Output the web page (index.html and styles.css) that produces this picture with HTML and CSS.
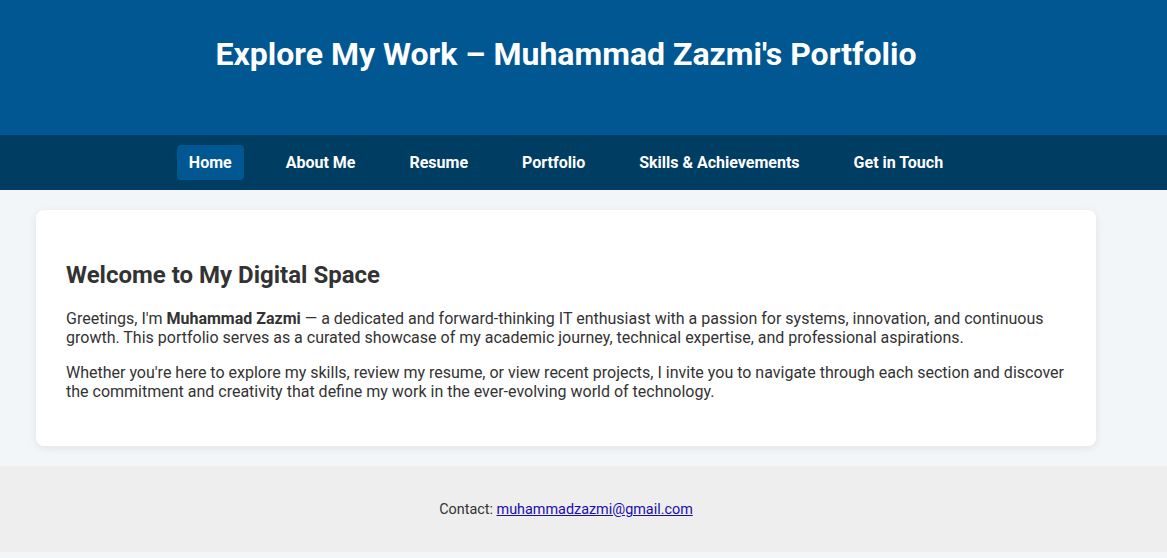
FILE: index.html
```html
<!DOCTYPE html>
<html lang="en">
<head>
<meta charset="utf-8">
<title>Muhammad Zazmi's Portfolio</title>
<link rel="stylesheet" href="styles.css">
</head>
<body>
<header class="site-header">
  <div class="wrap">
    <h1 class="site-title">Explore My Work – Muhammad Zazmi's Portfolio</h1>
  </div>
</header>
<nav class="site-nav">
  <div class="wrap nav-list">
    <a class="nav-link active" href="#">Home</a>
    <a class="nav-link" href="#">About Me</a>
    <a class="nav-link" href="#">Resume</a>
    <a class="nav-link" href="#">Portfolio</a>
    <a class="nav-link" href="#">Skills &amp; Achievements</a>
    <a class="nav-link" href="#">Get in Touch</a>
  </div>
</nav>
<main class="main">
  <div class="wrap">
    <section class="card">
      <h2 class="card-title">Welcome to My Digital Space</h2>
      <p>Greetings, I'm <strong>Muhammad Zazmi</strong> — a dedicated and forward-thinking IT enthusiast with a passion for systems, innovation, and continuous growth. This portfolio serves as a curated showcase of my academic journey, technical expertise, and professional aspirations.</p>
      <p>Whether you're here to explore my skills, review my resume, or view recent projects, I invite you to navigate through each section and discover the commitment and creativity that define my work in the ever-evolving world of technology.</p>
    </section>
  </div>
</main>
<footer class="site-footer">
  <div class="wrap">
    <p>Contact: <a href="mailto:muhammadzazmi@gmail.com">muhammadzazmi@gmail.com</a></p>
  </div>
</footer>
</body>
</html>
```
FILE: styles.css
```css
* { box-sizing: border-box; }
html, body {
  margin: 0;
  padding: 0;
}
body {
  font-family: Roboto, "Liberation Sans", Arial, sans-serif;
  background: #f2f6f9;
  color: #333;
}
.wrap {
  width: 1132px;
}
.site-header {
  background: #005792;
  color: #fff;
  height: 135px;
}
.site-header .wrap {
  display: flex;
  justify-content: center;
  padding-top: 34px;
}
.site-title {
  margin: 0;
  font-size: 32px;
  font-weight: 700;
  line-height: 40px;
}
.site-nav {
  background: #003d63;
  height: 55px;
}
.nav-list {
  display: flex;
  justify-content: center;
  align-items: center;
  height: 55px;
  gap: 30px;
}
.nav-link {
  color: #fff;
  text-decoration: none;
  font-weight: 700;
  font-size: 16px;
  line-height: 19px;
  padding: 8px 12px;
  border-radius: 4px;
}
.nav-link.active {
  background: #005792;
}
.main {
  padding: 20px 0;
}
.main .wrap {
  padding: 0 36px;
}
.card {
  background: #fff;
  border-radius: 8px;
  padding: 31px 30px 29px;
  box-shadow: 0 2px 8px rgba(0, 0, 0, 0.08);
}
.card-title {
  font-size: 24px;
  font-weight: 700;
  line-height: 28px;
  margin: 20px 0;
  color: #333;
}
.card p {
  font-size: 16px;
  line-height: 19px;
  margin: 16px 0;
}
.site-footer {
  background: #eeeeee;
  height: 86px;
}
.site-footer .wrap {
  padding: 21px 0 20px;
  text-align: center;
}
.site-footer p {
  margin: 14px 0;
  font-size: 14.4px;
  line-height: 17px;
  color: #333;
}
.site-footer a {
  color: #1a0dab;
}
```
